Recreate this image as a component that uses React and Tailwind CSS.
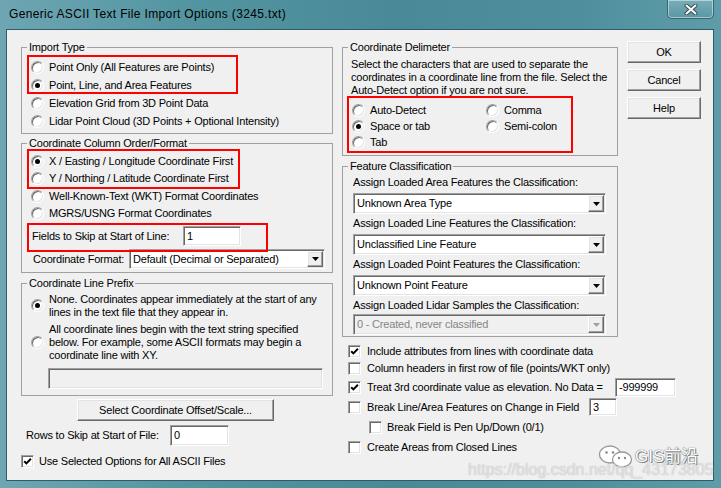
import React from "react";

const sunken =
  "border border-t-[#a0a0a0] border-l-[#a0a0a0] border-r-white border-b-white shadow-[inset_1px_1px_0_#696969,inset_-1px_-1px_0_#e3e3e3]";
const raised =
  "border border-t-white border-l-white border-r-[#696969] border-b-[#696969] shadow-[inset_-1px_-1px_0_#a0a0a0,inset_1px_1px_0_#e3e3e3]";

function Radio({ checked }) {
  return (
    <span
      className={`w-[13px] h-[13px] shrink-0 rounded-full bg-white flex items-center justify-center ${sunken}`}
    >
      {checked && <span className="w-[5px] h-[5px] rounded-full bg-black" />}
    </span>
  );
}

function Check({ checked }) {
  return (
    <span
      className={`w-[13px] h-[13px] shrink-0 bg-white flex items-center justify-center ${sunken}`}
    >
      {checked && (
        <svg width="9" height="9" viewBox="0 0 9 9">
          <path d="M1.2 4.2 L3.4 6.4 L7.9 1.8" stroke="#000" strokeWidth="2" fill="none" />
        </svg>
      )}
    </span>
  );
}

function Group({ title, className, children }) {
  return (
    <fieldset className={`border border-[#a0a0a0] ${className}`}>
      <legend className="ml-[5px] px-[2px] leading-[13px]">{title}</legend>
      {children}
    </fieldset>
  );
}

function RadioRow({ checked, label, className }) {
  return (
    <div className={`flex items-center ${className}`}>
      <Radio checked={checked} />
      <span className="ml-[5px] whitespace-nowrap">{label}</span>
    </div>
  );
}

function Field({ value, className, disabled }) {
  return (
    <div
      className={`${sunken} ${disabled ? "bg-[#f0f0f0]" : "bg-white"} flex items-center pl-[3px] shrink-0 ${className}`}
    >
      {value}
    </div>
  );
}

function Combo({ value, className, disabled }) {
  return (
    <div
      className={`${sunken} p-[1px] flex items-stretch shrink-0 ${
        disabled ? "bg-[#f0f0f0] text-[#858585]" : "bg-white"
      } ${className}`}
    >
      <span className="flex-1 flex items-center pl-[2px] whitespace-nowrap overflow-hidden">{value}</span>
      <span className={`w-[16px] bg-[#f0f0f0] flex items-center justify-center ${raised}`}>
        <svg width="7" height="4" viewBox="0 0 7 4">
          <path d="M0 0H7L3.5 4Z" fill={disabled ? "#a0a0a0" : "#000"} />
        </svg>
      </span>
    </div>
  );
}

function Btn({ children, className }) {
  return (
    <div className={`${raised} bg-[#f0f0f0] flex items-center justify-center shrink-0 ${className}`}>
      {children}
    </div>
  );
}

function CheckRow({ checked, label, className, children }) {
  return (
    <div className={`flex items-center whitespace-nowrap ${className}`}>
      <Check checked={checked} />
      {children ? children : <span className="ml-[6px]">{label}</span>}
    </div>
  );
}

export default function App() {
  return (
    <div className="w-[721px] h-[488px] overflow-hidden relative font-['Liberation_Sans',Arial,sans-serif] text-[11px] leading-[13px] tracking-[-0.2px] text-black bg-[linear-gradient(90deg,#6ea6b3_0%,#5495a2_25%,#4a8a98_55%,#4f8f9d_80%,#5f9ca9_100%)]">
      {/* Title bar */}
      <div className="h-[29px] flex items-start justify-between">
        <span className="ml-[9px] mt-[7px] text-[12px] leading-[15px] tracking-[0.35px] whitespace-nowrap text-black">
          Generic ASCII Text File Import Options (3245.txt)
        </span>
        <div className="mr-[7px] w-[47px] h-[19px] rounded-b-[5px] border border-t-0 border-[#3a6670] bg-[linear-gradient(180deg,#78adb9,#5a97a4)] shadow-[inset_0_0_0_1px_rgba(255,255,255,0.45)] flex items-center justify-center">
          <svg width="14" height="11" viewBox="0 0 14 11">
            <path d="M2.5 1.5 L11.5 9.5 M11.5 1.5 L2.5 9.5" stroke="#3b4a50" strokeWidth="4" strokeLinecap="round" />
            <path d="M2.5 1.5 L11.5 9.5 M11.5 1.5 L2.5 9.5" stroke="#ffffff" strokeWidth="2" strokeLinecap="round" />
          </svg>
        </div>
      </div>

      {/* Client area */}
      <div className="ml-[6px] w-[708px] h-[452px] border border-[#2f5d66] bg-[#f0f0f0] relative">
        <div className="flex pt-[11px] pl-[14px]">
          {/* Left column */}
          <div className="w-[312px] shrink-0 flex flex-col">
            <Group title="Import Type" className="">
              <div className="pt-[4px] pb-[3px] pl-[9px]">
                <RadioRow className="h-[18px]" label="Point Only (All Features are Points)" />
                <RadioRow className="h-[18px]" checked label="Point, Line, and Area Features" />
                <RadioRow className="h-[18px]" label="Elevation Grid from 3D Point Data" />
                <RadioRow className="h-[18px]" label="Lidar Point Cloud (3D Points + Optional Intensity)" />
              </div>
            </Group>

            <Group title="Coordinate Column Order/Format" className="mt-[3px]">
              <div className="pt-[2px] pb-[3px]">
                <div className="pl-[9px]">
                  <RadioRow className="h-[18px]" checked label="X / Easting / Longitude Coordinate First" />
                  <RadioRow className="h-[17px]" label="Y / Northing / Latitude Coordinate First" />
                  <RadioRow className="h-[18px]" label="Well-Known-Text (WKT) Format Coordinates" />
                  <RadioRow className="h-[17px]" label="MGRS/USNG Format Coordinates" />
                </div>
                <div className="mt-[4px] h-[20px] flex items-center pl-[10px]">
                  <span className="w-[151px] whitespace-nowrap">Fields to Skip at Start of Line:</span>
                  <Field value="1" className="w-[58px] h-[20px]" />
                </div>
                <div className="mt-[3px] h-[20px] flex items-center pl-[11px]">
                  <span className="w-[96px] whitespace-nowrap">Coordinate Format:</span>
                  <Combo value="Default (Decimal or Separated)" className="w-[196px] h-[20px]" />
                </div>
              </div>
            </Group>

            <Group title="Coordinate Line Prefix" className="mt-[4px]">
              <div className="pt-[3px] pb-[6px] pl-[9px]">
                <div className="flex items-center">
                  <span className="mt-[-1px]">
                    <Radio checked />
                  </span>
                  <span className="ml-[5px] whitespace-nowrap">
                    None. Coordinates appear immediately at the start of any
                    <br />
                    lines in the text file that they appear in.
                  </span>
                </div>
                <div className="mt-[4px] flex items-center">
                  <Radio />
                  <span className="ml-[5px] whitespace-nowrap">
                    All coordinate lines begin with the text string specified
                    <br />
                    below. For example, some ASCII formats may begin a
                    <br />
                    coordinate line with XY.
                  </span>
                </div>
                <div className="mt-[6px] pl-[17px]">
                  <Field value="" disabled className="w-[275px] h-[21px]" />
                </div>
              </div>
            </Group>

            <Btn className="mt-[3px] ml-[56px] w-[197px] h-[22px]">Select Coordinate Offset/Scale...</Btn>

            <div className="mt-[4px] h-[21px] flex items-center pl-[5px]">
              <span className="w-[144px] whitespace-nowrap">Rows to Skip at Start of File:</span>
              <Field value="0" className="w-[59px] h-[21px]" />
            </div>

            <div className="mt-[9px] h-[13px] flex items-center">
              <Check checked />
              <span className="ml-[5px] whitespace-nowrap">Use Selected Options for All ASCII Files</span>
            </div>
          </div>

          {/* Right column */}
          <div className="w-[276px] ml-[9px] shrink-0 flex flex-col">
            <Group title="Coordinate Delimeter" className="">
              <div className="pt-[4px] pb-[5px]">
                <div className="pl-[8px] whitespace-nowrap">
                  Select the characters that are used to separate the
                  <br />
                  coordinates in a coordinate line from the file. Select the
                  <br />
                  Auto-Detect option if you are not sure.
                </div>
                <div className="mt-[5px] pl-[9px] grid grid-cols-[134px_auto]">
                  <RadioRow className="h-[16px]" label="Auto-Detect" />
                  <RadioRow className="h-[16px]" label="Comma" />
                  <RadioRow className="h-[16px]" checked label="Space or tab" />
                  <RadioRow className="h-[16px]" label="Semi-colon" />
                  <RadioRow className="h-[16px]" label="Tab" />
                </div>
              </div>
            </Group>

            <Group title="Feature Classification" className="mt-[4px]">
              <div className="pt-[3px] pb-[1px] pl-[10px] flex flex-col">
                <span className="whitespace-nowrap">Assign Loaded Area Features the Classification:</span>
                <Combo value="Unknown Area Type" className="mt-[4px] w-[253px] h-[21px]" />
                <span className="mt-[3px] whitespace-nowrap">Assign Loaded Line Features the Classification:</span>
                <Combo value="Unclassified Line Feature" className="mt-[4px] w-[253px] h-[21px]" />
                <span className="mt-[3px] whitespace-nowrap">Assign Loaded Point Features the Classification:</span>
                <Combo value="Unknown Point Feature" className="mt-[4px] w-[253px] h-[21px]" />
                <span className="mt-[3px] whitespace-nowrap">Assign Loaded Lidar Samples the Classification:</span>
                <Combo value="0 - Created, never classified" disabled className="mt-[2px] w-[253px] h-[21px]" />
              </div>
            </Group>

            <div className="mt-[6px] pl-[6px] flex flex-col">
              <CheckRow className="h-[17px]" checked label="Include attributes from lines with coordinate data" />
              <CheckRow className="h-[17px]" label="Column headers in first row of file (points/WKT only)" />
              <CheckRow className="h-[20px]" checked>
                <span className="ml-[6px] w-[248px] shrink-0">Treat 3rd coordinate value as elevation. No Data =</span>
                <Field value="-999999" className="w-[61px] h-[19px]" />
              </CheckRow>
              <CheckRow className="h-[20px]">
                <span className="ml-[6px] w-[222px] shrink-0">Break Line/Area Features on Change in Field</span>
                <Field value="3" className="w-[28px] h-[18px]" />
              </CheckRow>
              <div className="h-[20px] pl-[21px] flex items-center whitespace-nowrap">
                <Check />
                <span className="ml-[5px]">Break Field is Pen Up/Down (0/1)</span>
              </div>
              <CheckRow className="h-[20px]" label="Create Areas from Closed Lines" />
            </div>
          </div>

          {/* Buttons column */}
          <div className="w-[74px] ml-[9px] shrink-0 flex flex-col">
            <Btn className="w-[74px] h-[22px]">OK</Btn>
            <Btn className="mt-[6px] w-[74px] h-[22px]">Cancel</Btn>
            <Btn className="mt-[6px] w-[74px] h-[22px]">Help</Btn>
          </div>
        </div>

        {/* Red annotation boxes */}
        <div className="absolute left-[20px] top-[25px] w-[211px] h-[39px] border-2 border-[#ff0000] pointer-events-none" />
        <div className="absolute left-[20px] top-[119px] w-[213px] h-[40px] border-2 border-[#ff0000] pointer-events-none" />
        <div className="absolute left-[20px] top-[193px] w-[241px] h-[29px] border-2 border-[#ff0000] pointer-events-none" />
        <div className="absolute left-[340px] top-[66px] w-[226px] h-[57px] border-2 border-[#ff0000] pointer-events-none" />
      </div>

      {/* Watermark */}
      <div className="absolute left-[598px] top-[445px] flex items-center pointer-events-none">
        <svg width="36" height="23" viewBox="0 0 36 23">
          <ellipse cx="12" cy="9.5" rx="10.5" ry="8.5" fill="#fff" stroke="#9a9a9a" strokeWidth="1.3" />
          <circle cx="8.5" cy="7.5" r="1.3" fill="#8a8a8a" />
          <circle cx="15" cy="7.5" r="1.3" fill="#8a8a8a" />
          <ellipse cx="24" cy="14.5" rx="9.5" ry="7.5" fill="#fff" stroke="#9a9a9a" strokeWidth="1.3" />
          <circle cx="21" cy="13" r="1.2" fill="#8a8a8a" />
          <circle cx="27" cy="13" r="1.2" fill="#8a8a8a" />
        </svg>
        <span className="ml-[1px] text-[17px] leading-[20px] tracking-[0px] font-['Liberation_Sans','Noto_Sans_CJK_SC',sans-serif] text-white [text-shadow:0_0_1px_#666,0_0_1px_#666,1px_1px_0_#888]">
          GIS前沿
        </span>
      </div>
      <div className="absolute left-[468px] top-[461px] text-[16px] leading-[18px] tracking-[0px] font-['Liberation_Sans',Arial,sans-serif] text-[#f4f4f4]/70 [text-shadow:0_0_1px_rgba(120,120,120,0.6)] pointer-events-none whitespace-nowrap">
        https://blog.csdn.net/qq_43173805
      </div>
    </div>
  );
}
